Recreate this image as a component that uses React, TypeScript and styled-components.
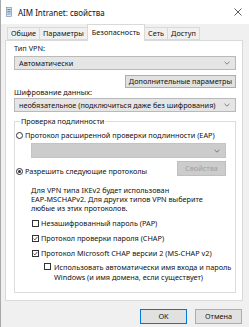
import styled, { createGlobalStyle } from "styled-components"

const GlobalStyle = createGlobalStyle`
  html, body {
    margin: 0;
    padding: 0;
    background: #f0f0f0;
  }
`

const Window = styled.div`
  width: 249px;
  height: 327px;
  box-sizing: border-box;
  background: #f0f0f0;
  border-left: 1px solid #a8a8a8;
  display: flex;
  flex-direction: column;
  font-family: "Noto Sans", "Open Sans", sans-serif;
  font-size: 7.3px;
  line-height: 9px;
  color: #111;
  overflow: hidden;
`

const TitleBar = styled.div`
  height: 24px;
  flex-shrink: 0;
  background: #fff;
  display: flex;
  align-items: center;
  gap: 6px;
  padding: 0 7px 0 5px;
`

const Title = styled.span`
  flex: 1;
  font-size: 8px;
`

const TabStrip = styled.div`
  display: flex;
  align-items: flex-end;
  height: 16px;
  padding-left: 6px;
  position: relative;
  z-index: 1;
`

const Tab = styled.div<{ $active?: boolean }>`
  height: ${({ $active }) => ($active ? "17px" : "13px")};
  margin-bottom: ${({ $active }) => ($active ? "-1px" : "0")};
  padding: 0 ${({ $active }) => ($active ? "4px" : "3px")};
  margin-right: -1px;
  box-sizing: border-box;
  display: flex;
  align-items: ${({ $active }) => ($active ? "flex-start" : "center")};
  padding-top: ${({ $active }) => ($active ? "3px" : "0")};
  background: ${({ $active }) => ($active ? "#fff" : "#f0f0f0")};
  border: 1px solid #d9d9d9;
  border-bottom: ${({ $active }) => ($active ? "none" : "1px solid #d9d9d9")};
  white-space: nowrap;
`

const Panel = styled.div`
  margin: 0 6px 0 4px;
  height: 261px;
  box-sizing: border-box;
  background: #fff;
  border: 1px solid #d9d9d9;
  padding: 0 6px 0 8px;
  display: flex;
  flex-direction: column;
`

const FieldLabel = styled.div<{ $top: number }>`
  margin-top: ${({ $top }) => $top}px;
  height: 9px;
`

const Combo = styled.div<{ $disabled?: boolean; $top: number; $left?: number; $right?: number; $h?: number }>`
  margin-top: ${({ $top }) => $top}px;
  margin-left: ${({ $left }) => $left ?? 0}px;
  margin-right: ${({ $right }) => $right ?? 0}px;
  height: ${({ $h }) => $h ?? 14}px;
  box-sizing: border-box;
  border: 1px solid ${({ $disabled }) => ($disabled ? "#c4c4c4" : "#b9b9b9")};
  background: ${({ $disabled }) => ($disabled ? "#cccccc" : "#e5e5e5")};
  display: flex;
  align-items: center;
  padding: 0 5px 0 4px;
  white-space: nowrap;
`

const ComboText = styled.span`
  flex: 1;
`

const Button = styled.div<{ $disabled?: boolean; $focus?: boolean; $w?: number; $h?: number }>`
  width: ${({ $w }) => ($w ? `${$w}px` : "auto")};
  height: ${({ $h }) => $h ?? 13}px;
  box-sizing: border-box;
  padding: 0 3px;
  display: flex;
  align-items: center;
  justify-content: center;
  white-space: nowrap;
  background: ${({ $disabled }) => ($disabled ? "#cccccc" : "#e1e1e1")};
  color: ${({ $disabled }) => ($disabled ? "#a0a0a0" : "#111")};
  border: 1px solid
    ${({ $disabled, $focus }) => ($disabled ? "#bfbfbf" : $focus ? "#0078d7" : "#adadad")};
`

const ButtonRow = styled.div<{ $top: number }>`
  display: flex;
  justify-content: flex-end;
  margin-top: ${({ $top }) => $top}px;
`

const GroupBox = styled.div`
  position: relative;
  margin-top: 9px;
  border: 1px solid #dcdcdc;
  padding: 8px 0 10px 1px;
  display: flex;
  flex-direction: column;
`

const GroupLabel = styled.span`
  position: absolute;
  top: -5px;
  left: 5px;
  padding: 0 1px;
  background: #fff;
  line-height: 9px;
`

const OptionRow = styled.div<{ $top?: number; $left?: number }>`
  display: flex;
  align-items: center;
  gap: 2px;
  height: 10px;
  margin-top: ${({ $top }) => $top ?? 0}px;
  margin-left: ${({ $left }) => $left ?? 0}px;
  white-space: nowrap;
`

const RadioSwitchRow = styled.div`
  display: flex;
  align-items: flex-end;
  justify-content: space-between;
  margin-top: 3px;
  margin-right: 9px;
`

const RadioDot = styled.span<{ $checked?: boolean }>`
  width: 7px;
  height: 7px;
  box-sizing: border-box;
  border-radius: 50%;
  border: 1px solid #333;
  background: #fff;
  display: flex;
  align-items: center;
  justify-content: center;
  flex-shrink: 0;

  &::after {
    content: "";
    display: ${({ $checked }) => ($checked ? "block" : "none")};
    width: 3px;
    height: 3px;
    border-radius: 50%;
    background: #333;
  }
`

const Box = styled.span`
  width: 7px;
  height: 7px;
  box-sizing: border-box;
  border: 1px solid #333;
  background: #fff;
  flex-shrink: 0;
  display: flex;
  align-items: center;
  justify-content: center;
`

const Note = styled.div`
  margin: 10px 0 0 15px;
  line-height: 9px;
  white-space: nowrap;
`

const NestedRow = styled.div`
  display: flex;
  align-items: flex-start;
  gap: 3px;
  margin: 4px 0 0 28px;
  line-height: 10px;
  white-space: nowrap;

  & > span:first-child {
    margin-top: 1px;
  }
`

const Footer = styled.div`
  display: flex;
  justify-content: flex-end;
  gap: 8px;
  margin-top: 8px;
  padding-right: 7px;
`

const Chevron = () => (
  <svg width="6" height="4" viewBox="0 0 6 4">
    <path d="M0.5 0.8 L3 3.2 L5.5 0.8" fill="none" stroke="#666" strokeWidth="0.8" />
  </svg>
)

const Check = ({ on }: { on?: boolean }) => (
  <Box>
    {on && (
      <svg width="5" height="5" viewBox="0 0 5 5">
        <path d="M0.6 2.6 L1.9 3.9 L4.4 0.9" fill="none" stroke="#222" strokeWidth="0.8" />
      </svg>
    )}
  </Box>
)

const VpnIcon = () => (
  <svg width="6" height="10" viewBox="0 0 6 10">
    <rect x="0.5" y="0.5" width="5" height="9" fill="#dfe6ee" stroke="#6f8299" strokeWidth="0.6" />
    <rect x="1.3" y="2" width="3.4" height="1.2" fill="#3d8ad6" />
    <rect x="1.3" y="4.2" width="3.4" height="1.2" fill="#3d8ad6" />
    <rect x="1.3" y="6.4" width="3.4" height="1.2" fill="#7fa7cf" />
  </svg>
)

const CloseIcon = () => (
  <svg width="8" height="8" viewBox="0 0 8 8">
    <path d="M0.5 0.5 L7.5 7.5 M7.5 0.5 L0.5 7.5" stroke="#333" strokeWidth="0.8" />
  </svg>
)

const App = () => {
  return (
    <>
      <GlobalStyle />
      <Window>
        <TitleBar>
          <VpnIcon />
          <Title>AIM Intranet: свойства</Title>
          <CloseIcon />
        </TitleBar>

        <TabStrip>
          <Tab>Общие</Tab>
          <Tab>Параметры</Tab>
          <Tab $active>Безопасность</Tab>
          <Tab>Сеть</Tab>
          <Tab>Доступ</Tab>
        </TabStrip>

        <Panel>
          <FieldLabel $top={3}>Тип VPN:</FieldLabel>
          <Combo $top={3}>
            <ComboText>Автоматически</ComboText>
            <Chevron />
          </Combo>
          <ButtonRow $top={5}>
            <Button>Дополнительные параметры</Button>
          </ButtonRow>

          <FieldLabel $top={0}>Шифрование данных:</FieldLabel>
          <Combo $top={1}>
            <ComboText>необязательное (подключиться даже без шифрования)</ComboText>
            <Chevron />
          </Combo>

          <GroupBox>
            <GroupLabel>Проверка подлинности</GroupLabel>
            <OptionRow>
              <RadioDot />
              <span>Протокол расширенной проверки подлинности (EAP)</span>
            </OptionRow>
            <Combo $disabled $top={3} $left={15} $right={9} $h={15}>
              <ComboText />
              <Chevron />
            </Combo>
            <RadioSwitchRow>
              <OptionRow>
                <RadioDot $checked />
                <span>Разрешить следующие протоколы</span>
              </OptionRow>
              <Button $disabled $w={49} $h={15}>
                Свойства
              </Button>
            </RadioSwitchRow>

            <Note>
              Для VPN типа IKEv2 будет использован
              <br />
              EAP-MSCHAPv2. Для других типов VPN выберите
              <br />
              любые из этих протоколов.
            </Note>

            <OptionRow $top={5} $left={16}>
              <Check />
              <span>Незашифрованный пароль (PAP)</span>
            </OptionRow>
            <OptionRow $top={5} $left={16}>
              <Check on />
              <span>Протокол проверки пароля (CHAP)</span>
            </OptionRow>
            <OptionRow $top={5} $left={16}>
              <Check on />
              <span>Протокол Microsoft CHAP версии 2 (MS-CHAP v2)</span>
            </OptionRow>
            <NestedRow>
              <Check />
              <span>
                Использовать автоматически имя входа и пароль
                <br />
                Windows (и имя домена, если существует)
              </span>
            </NestedRow>
          </GroupBox>
        </Panel>

        <Footer>
          <Button $focus $w={47} $h={15}>
            OK
          </Button>
          <Button $w={47} $h={15}>
            Отмена
          </Button>
        </Footer>
      </Window>
    </>
  )
}

export default App
